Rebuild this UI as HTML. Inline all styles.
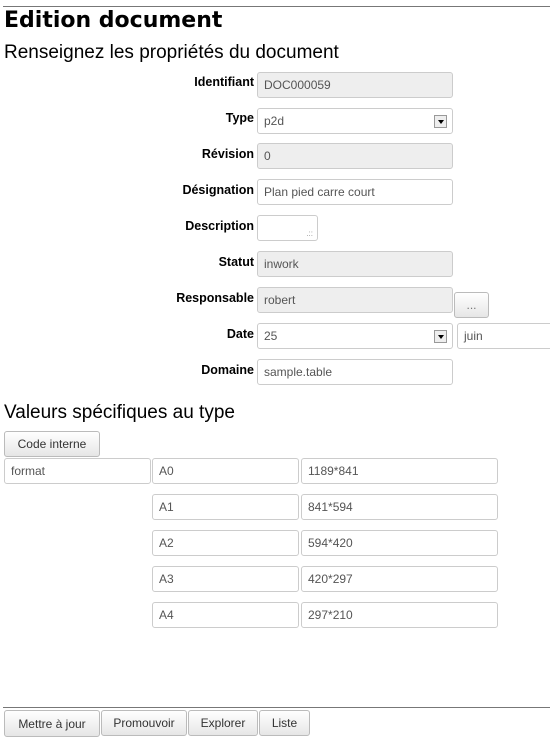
<!DOCTYPE html>
<html><head><meta charset="utf-8"><style>
body{margin:0;width:550px;height:744px;background:#fff;font-family:"Liberation Sans",sans-serif;position:relative;overflow:hidden}
.a{position:absolute}
.hr{position:absolute;left:3px;right:0;height:1px;background:#777}
.lb{position:absolute;right:296px;font-weight:bold;font-size:12.5px;color:#000;white-space:nowrap}
.in{position:absolute;box-sizing:border-box;border:1px solid #ccc;border-radius:3px;background:#fff;font-size:12px;color:#555;padding:0 6px;line-height:24px;height:26px}
.ro{background:#eee}
.bt{position:absolute;box-sizing:border-box;border:1px solid #bbb;border-radius:3px;background:linear-gradient(#fff,#e6e6e6);font-size:12px;color:#333;text-align:center;line-height:24px;height:26px}
.ar{position:absolute;right:5px;top:6px;width:13px;height:13px;box-sizing:border-box;border:1px solid #999;background:#eee}
.ar:after{content:"";position:absolute;left:3px;top:4px;border:3px solid transparent;border-top:4px solid #000}
</style></head><body>
<div class="hr" style="top:6px"></div>
<div class="a" style="left:4px;top:8px;font-size:22px;font-weight:bold;font-family:'DejaVu Sans',sans-serif">Edition document</div>
<div class="a" style="left:4px;top:42px;font-size:19px">Renseignez les propriétés du document</div>

<div class="lb" style="top:75px">Identifiant</div><div class="in ro" style="left:257px;top:72px;width:196px">DOC000059</div>
<div class="lb" style="top:111px">Type</div><div class="in" style="left:257px;top:108px;width:196px">p2d<div class="ar"></div></div>
<div class="lb" style="top:147px">Révision</div><div class="in ro" style="left:257px;top:143px;width:196px">0</div>
<div class="lb" style="top:183px">Désignation</div><div class="in" style="left:257px;top:179px;width:196px">Plan pied carre court</div>
<div class="lb" style="top:219px">Description</div><div class="in" style="left:257px;top:215px;width:61px"><span class="a" style="right:4px;bottom:2px;font-size:8px;line-height:8px;color:#999">.::</span></div>
<div class="lb" style="top:255px">Statut</div><div class="in ro" style="left:257px;top:251px;width:196px">inwork</div>
<div class="lb" style="top:291px">Responsable</div><div class="in ro" style="left:257px;top:287px;width:196px">robert</div>
<div class="bt" style="left:454px;top:292px;width:35px;color:#777">...</div>
<div class="lb" style="top:327px">Date</div><div class="in" style="left:257px;top:323px;width:196px">25<div class="ar"></div></div>
<div class="in" style="left:457px;top:323px;width:100px">juin</div>
<div class="lb" style="top:363px">Domaine</div><div class="in" style="left:257px;top:359px;width:196px">sample.table</div>

<div class="a" style="left:4px;top:402px;font-size:19px">Valeurs spécifiques au type</div>
<div class="bt" style="left:4px;top:431px;width:96px">Code interne</div>
<div class="in" style="left:4px;top:458px;width:147px">format</div>
<div class="in" style="left:152px;top:458px;width:147px">A0</div><div class="in" style="left:301px;top:458px;width:197px">1189*841</div>
<div class="in" style="left:152px;top:494px;width:147px">A1</div><div class="in" style="left:301px;top:494px;width:197px">841*594</div>
<div class="in" style="left:152px;top:530px;width:147px">A2</div><div class="in" style="left:301px;top:530px;width:197px">594*420</div>
<div class="in" style="left:152px;top:566px;width:147px">A3</div><div class="in" style="left:301px;top:566px;width:197px">420*297</div>
<div class="in" style="left:152px;top:602px;width:147px">A4</div><div class="in" style="left:301px;top:602px;width:197px">297*210</div>

<div class="hr" style="top:707px"></div>
<div class="bt" style="left:4px;top:710px;width:96px;height:27px;line-height:26px">Mettre à jour</div>
<div class="bt" style="left:101px;top:710px;width:86px">Promouvoir</div>
<div class="bt" style="left:188px;top:710px;width:70px">Explorer</div>
<div class="bt" style="left:259px;top:710px;width:51px">Liste</div>
</body></html>
